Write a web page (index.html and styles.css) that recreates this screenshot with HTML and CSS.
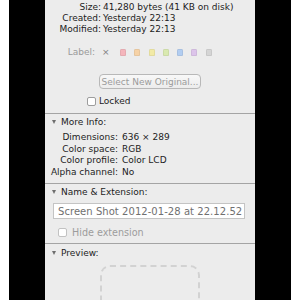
FILE: index.html
```html
<!DOCTYPE html>
<html>
<head>
<meta charset="utf-8">
<link rel="stylesheet" href="styles.css">
</head>
<body>
<div class="screen">
  <div class="edge-white"></div>
  <div class="edge-black"></div>
  <div class="panel">
    <div class="general">
      <div class="info">
        <span class="k">Size:</span><span class="v">41,280 bytes (41 KB on disk)</span>
        <span class="k">Created:</span><span class="v">Yesterday 22:13</span>
        <span class="k">Modified:</span><span class="v">Yesterday 22:13</span>
      </div>
      <div class="labels">
        <span class="label-k">Label:</span>
        <span class="x">×</span>
        <span class="sw red"></span>
        <span class="sw orange"></span>
        <span class="sw yellow"></span>
        <span class="sw green"></span>
        <span class="sw blue"></span>
        <span class="sw purple"></span>
        <span class="sw gray"></span>
      </div>
      <div class="btn-row"><span class="btn">Select New Original...</span></div>
      <div class="check-row locked"><span class="box"></span><span>Locked</span></div>
    </div>
    <div class="section">
      <div class="head"><span class="tri"></span>More Info:</div>
      <div class="info more">
        <span class="k">Dimensions:</span><span class="v">636 × 289</span>
        <span class="k">Color space:</span><span class="v">RGB</span>
        <span class="k">Color profile:</span><span class="v">Color LCD</span>
        <span class="k">Alpha channel:</span><span class="v">No</span>
      </div>
    </div>
    <div class="section">
      <div class="head"><span class="tri"></span>Name &amp; Extension:</div>
      <div class="field">Screen Shot 2012-01-28 at 22.12.52</div>
      <div class="check-row hide"><span class="box"></span><span>Hide extension</span></div>
    </div>
    <div class="section last">
      <div class="head"><span class="tri"></span>Preview:</div>
      <div class="preview"><div class="dash"></div></div>
    </div>
  </div>
  <div class="edge-black"></div>
  <div class="edge-white"></div>
</div>
</body>
</html>
```
FILE: styles.css
```css
html, body {
  margin: 0;
  padding: 0;
  background: #fff;
}
.screen {
  display: flex;
  height: 300px;
  overflow: hidden;
  font-family: "DejaVu Sans", sans-serif;
  font-size: 9px;
  color: #1c1c1c;
}
.edge-white { width: 9px; background: #fff; flex: none; }
.edge-black { width: 36px; background: #000; flex: none; }
.panel {
  width: 210px;
  flex: none;
  background: #ececec;
  overflow: hidden;
}
.general {
  padding-top: 2px;
  padding-bottom: 7px;
  border-bottom: 1px solid #a4a4a4;
}
.info {
  display: grid;
  grid-template-columns: 56px 1fr;
  column-gap: 2px;
  line-height: 11px;
}
.info .k { text-align: right; white-space: nowrap; }
.info .v { white-space: nowrap; }
.labels {
  display: flex;
  align-items: center;
  margin-top: 11.5px;
  height: 11px;
}
.label-k {
  width: 50px;
  text-align: right;
  color: #9a9a9a;
}
.x {
  margin-left: 7px;
  color: #808080;
  font-size: 9px;
  width: 13px;
}
.sw {
  width: 6px;
  height: 7px;
  border-radius: 1.5px;
  margin-left: 8.3px;
  box-shadow: inset 0 0 0 0.5px rgba(0,0,0,0.12);
}
.sw.red { margin-left: 5px; background: #f4b5bb; }
.sw.orange { background: #f6d2a6; }
.sw.yellow { background: #f2eaa6; }
.sw.green { background: #d9e9b0; }
.sw.blue { background: #b2cdf1; }
.sw.purple { background: #dcc4ea; }
.sw.gray { background: #d5d5d5; }
.btn-row {
  display: flex;
  justify-content: center;
  margin-top: 16.5px;
}
.btn {
  display: flex;
  align-items: center;
  justify-content: center;
  width: 100px;
  height: 13px;
  border: 1px solid #b8b8b8;
  border-radius: 4px;
  background: linear-gradient(#f8f8f8, #ececec);
  color: #9b9b9b;
}
.check-row {
  display: flex;
  align-items: center;
  gap: 3px;
  height: 10px;
}
.box {
  width: 7px;
  height: 7px;
  border: 1px solid #9d9d9d;
  border-radius: 2px;
  background: #fff;
  flex: none;
}
.locked { margin-top: 7px; padding-left: 42px; }
.section {
  border-bottom: 1px solid #a4a4a4;
}
.section.last { border-bottom: none; }
.head {
  display: flex;
  align-items: center;
  height: 12px;
  margin-top: 2px;
  padding-left: 7px;
  color: #1c1c1c;
}
.section.last .head { margin-top: 3px; }
.tri {
  width: 0;
  height: 0;
  border-left: 2.5px solid transparent;
  border-right: 2.5px solid transparent;
  border-top: 4px solid #6e6e6e;
  margin-right: 5px;
}
.info.more {
  grid-template-columns: 73px 1fr;
  column-gap: 4px;
  line-height: 11.5px;
  margin-top: 4.25px;
  padding-bottom: 5px;
}
.field {
  margin: 5px 10px 0 8px;
  height: 14px;
  background: #fff;
  border: 1px solid #c4c4c4;
  color: #707070;
  font-size: 10px;
  letter-spacing: 0.05px;
  display: flex;
  align-items: center;
  padding-left: 4px;
  white-space: nowrap;
  overflow: hidden;
}
.hide {
  margin-top: 8px;
  margin-bottom: 6px;
  padding-left: 13px;
  gap: 5px;
  color: #9c9c9c;
  font-size: 9.6px;
}
.hide .box { border-color: #c2c2c2; }
.preview {
  display: flex;
  justify-content: center;
  padding-top: 6px;
  height: 60px;
}
.dash {
  width: 96px;
  height: 80px;
  border: 2px dashed #d2d2d2;
  border-radius: 10px;
}
```
